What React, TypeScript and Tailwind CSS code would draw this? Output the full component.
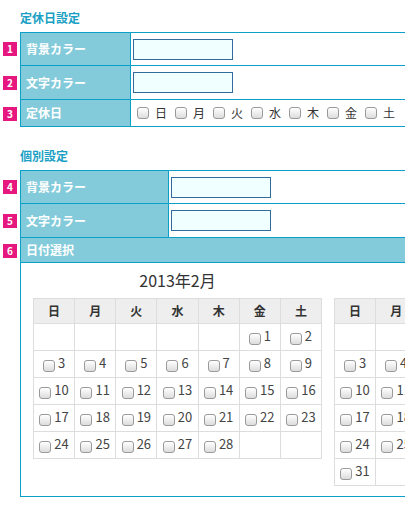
import type { ReactNode } from 'react'

const FONT = { fontFamily: '"Noto Sans CJK JP", "Noto Sans", sans-serif' }

const WEEK = ['日', '月', '火', '水', '木', '金', '土']

function Box() {
  return (
    <span className="inline-block w-[12px] h-[12px] shrink-0 rounded-[3px] border border-[#9a9a9a] bg-gradient-to-b from-white to-[#dcdcdc] shadow-[inset_0_1px_0_#fff]" />
  )
}

function Badge({ n }: { n: number }) {
  return (
    <div className="w-[20px] shrink-0 flex items-center">
      <span className="ml-[3px] w-[14px] h-[14px] bg-[#e6187f] text-white text-[10px] font-bold leading-[14px] text-center">
        {n}
      </span>
    </div>
  )
}

function Row({ n, label, labelW, h, first, children }: {
  n: number
  label: string
  labelW: string
  h: string
  first?: boolean
  children: ReactNode
}) {
  return (
    <div className="flex">
      <Badge n={n} />
      <div className={`flex flex-1 border-l border-b border-[#0aa0c8] ${first ? 'border-t' : ''} ${h}`}>
        <div className={`${labelW} shrink-0 bg-[#83cbda] border-r border-[#0aa0c8] flex items-center pl-[5px] text-white text-[12px] font-bold`}>
          {label}
        </div>
        <div className="flex-1 flex items-center pl-[2px]">{children}</div>
      </div>
    </div>
  )
}

function ColorInput() {
  return <div className="w-[100px] h-[21px] border border-[#336b9c] bg-[#f0ffff]" />
}

function Calendar({ title, start, days }: { title: string; start: number; days: number }) {
  const cells: (number | null)[] = []
  for (let i = 0; i < start; i++) cells.push(null)
  for (let d = 1; d <= days; d++) cells.push(d)
  while (cells.length % 7) cells.push(null)
  const weeks: (number | null)[][] = []
  for (let i = 0; i < cells.length; i += 7) weeks.push(cells.slice(i, i + 7))

  return (
    <div className="w-[289px] shrink-0">
      <div className="h-[32px] text-center text-[16px] leading-[24px] pt-[2px] text-[#333]">{title}</div>
      <table className="border-collapse w-[289px] table-fixed">
        <thead>
          <tr className="h-[25px] bg-[#eeeeee]">
            {WEEK.map(w => (
              <th key={w} className="border border-[#dddddd] text-[12px] font-bold text-[#333] w-[41px]">{w}</th>
            ))}
          </tr>
        </thead>
        <tbody>
          {weeks.map((wk, i) => (
            <tr key={i} className="h-[27px]">
              {wk.map((d, j) => (
                <td key={j} className="border border-[#dddddd] p-0">
                  {d && (
                    <div className="flex items-center justify-center gap-[3px] text-[13px] text-[#444]">
                      <span className="mt-[3px] flex"><Box /></span>
                      <span className="leading-[14px] -mt-[2px]">{d}</span>
                    </div>
                  )}
                </td>
              ))}
            </tr>
          ))}
        </tbody>
      </table>
    </div>
  )
}

export default function App() {
  return (
    <div className="w-[405px] h-[505px] overflow-hidden bg-white" style={FONT}>
      <div className="w-[560px]">
        <h2 className="pl-[20px] pt-[9px] h-[32px] text-[12px] font-bold text-[#1a9fc4]">定休日設定</h2>
        <Row n={1} label="背景カラー" labelW="w-[110px]" h="h-[34px]" first>
          <ColorInput />
        </Row>
        <Row n={2} label="文字カラー" labelW="w-[110px]" h="h-[34px]">
          <ColorInput />
        </Row>
        <Row n={3} label="定休日" labelW="w-[110px]" h="h-[27px]">
          <div className="flex items-center gap-[8px] pl-[4px] text-[12px] text-[#333]">
            {WEEK.map(w => (
              <div key={w} className="flex items-center gap-[6px]">
                <Box />
                <span>{w}</span>
              </div>
            ))}
          </div>
        </Row>

        <h2 className="pl-[20px] pt-[20px] h-[43px] text-[12px] font-bold text-[#1a9fc4]">個別設定</h2>
        <Row n={4} label="背景カラー" labelW="w-[148px]" h="h-[34px]" first>
          <ColorInput />
        </Row>
        <Row n={5} label="文字カラー" labelW="w-[148px]" h="h-[34px]">
          <ColorInput />
        </Row>
        <div className="flex">
          <Badge n={6} />
          <div className="flex-1 h-[25px] bg-[#83cbda] border-l border-b border-[#0aa0c8] flex items-center pl-[5px] text-white text-[12px] font-bold">
            日付選択
          </div>
        </div>
        <div className="ml-[20px] border-l border-b border-[#0aa0c8] h-[234px] pl-[12px] pt-[3px] flex gap-[12px]">
          <Calendar title="2013年2月" start={5} days={28} />
          <Calendar title="2013年3月" start={5} days={31} />
        </div>
      </div>
    </div>
  )
}
